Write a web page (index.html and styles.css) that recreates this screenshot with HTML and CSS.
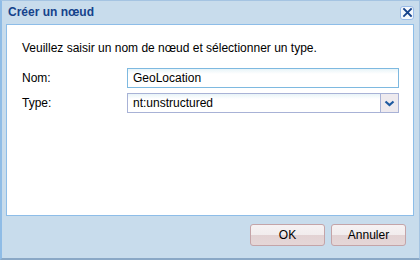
FILE: index.html
```html
<!DOCTYPE html>
<html>
<head>
<meta charset="utf-8">
<link rel="stylesheet" href="styles.css">
</head>
<body>
<div class="dialog">
  <div class="titlebar">
    <span class="title">Créer un nœud</span>
    <span class="close"><svg width="11" height="11" viewBox="0 0 11 11"><path d="M2 2 L9 9 M9 2 L2 9" stroke="#15428b" stroke-width="1.8" stroke-linecap="square"/></svg></span>
  </div>
  <div class="body">
    <p class="intro">Veuillez saisir un nom de nœud et sélectionner un type.</p>
    <div class="row">
      <label class="label">Nom:</label>
      <div class="field">GeoLocation</div>
    </div>
    <div class="row">
      <label class="label">Type:</label>
      <div class="field combo"><span class="value">nt:unstructured</span><span class="trigger"><svg width="11" height="7" viewBox="0 0 11 7"><path d="M1.5 1.5 L5.5 5 L9.5 1.5" fill="none" stroke="#1e5aa0" stroke-width="2.2"/></svg></span></div>
    </div>
  </div>
  <div class="footer">
    <button class="btn">OK</button>
    <button class="btn">Annuler</button>
  </div>
</div>
</body>
</html>
```
FILE: styles.css
```css
html, body { margin: 0; padding: 0; }
body { width: 420px; height: 260px; background: #fff; font-family: "Liberation Sans", "DejaVu Sans", sans-serif; font-size: 12px; }
.dialog {
  box-sizing: border-box;
  width: 420px; height: 260px;
  background: #c8dcec;
  border: 1px solid #a5c4e2;
  border-left: 2px solid #8fbce6;
  border-bottom: 2px solid #8aa8c6;
  display: flex; flex-direction: column;
  padding: 0 5px 0 4px;
}
.titlebar {
  height: 23px;
  display: flex; align-items: center; justify-content: space-between;
  padding: 0 0 0 2px;
}
.title { font-weight: bold; color: #15428b; font-size: 12px; position: relative; top: -1px; }
.close {
  width: 14px; height: 14px;
  box-sizing: border-box;
  border: 1px solid #99bbe8;
  border-radius: 3px;
  background: #f4f8fd;
  display: flex; align-items: center; justify-content: center;
}
.body {
  box-sizing: border-box;
  height: 192px;
  background: #fff;
  border: 1px solid #8dbde8;
  padding: 16px 14px 0 14px;
}
.intro { margin: 0 0 13px 1px; color: #000; font-size: 12px; }
.row { display: flex; align-items: center; margin-bottom: 5px; }
.label { width: 105px; padding-left: 1px; color: #000; }
.field {
  box-sizing: border-box;
  width: 272px; height: 20px;
  border: 1px solid #7eb9e0;
  background: linear-gradient(#e8f4f8 0, #ffffff 5px);
  padding: 0 5px;
  display: flex; align-items: center;
  font-size: 12px; color: #000;
}
.combo { border-color: #a8b2d6; padding-right: 0; justify-content: space-between; }
.trigger {
  width: 17px; height: 18px;
  border-left: 1px solid #a8b2d6;
  background: #eeeaee;
  display: flex; align-items: center; justify-content: center;
}
.footer {
  flex: 1;
  display: flex; justify-content: flex-end; align-items: flex-start;
  gap: 6px;
  padding: 8px 8px 0 0;
}
.btn {
  width: 75px; height: 22px;
  border: 1px solid #c4a4a8;
  border-radius: 3px;
  background: linear-gradient(#f6f2f3 0, #f1eced 50%, #e2d2d3 50%, #e5d6d7 100%);
  font-family: "Liberation Sans", "DejaVu Sans", sans-serif;
  font-size: 12px; color: #000;
  padding: 0;
}
```
